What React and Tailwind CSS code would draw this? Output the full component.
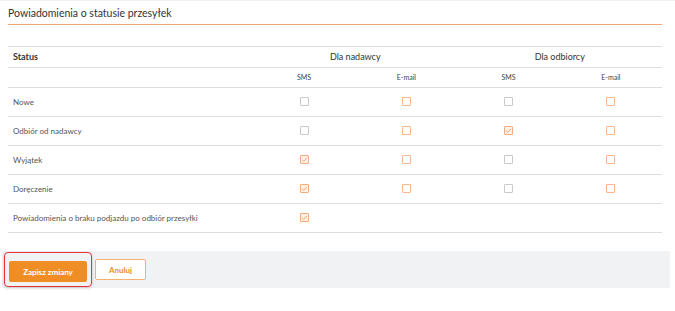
import React from 'react';

const rows = [
  { label: 'Nowe', cells: ['off', 'o', 'off', 'o'] },
  { label: 'Odbiór od nadawcy', cells: ['off', 'o', 'on', 'o'] },
  { label: 'Wyjątek', cells: ['on', 'o', 'off', 'o'] },
  { label: 'Doręczenie', cells: ['on', 'o', 'off', 'o'] },
  { label: 'Powiadomienia o braku podjazdu po odbiór przesyłki', cells: ['on', null, null, null] },
];

const Box = ({ kind }) => {
  if (!kind) return null;
  if (kind === 'on') {
    return (
      <span className="flex mx-auto w-[9px] h-[9px] items-center justify-center border border-[#f5ad7f] bg-[#fdf1e8] rounded-[1px]">
        <svg width="7" height="7" viewBox="0 0 7 7">
          <path d="M1 3.8 L2.8 5.3 L6 1.8" fill="none" stroke="#f0a070" strokeWidth="0.9" />
        </svg>
      </span>
    );
  }
  const color = kind === 'o' ? 'border-[#f7b68c]' : 'border-[#c6c9ce]';
  return <span className={`block mx-auto w-[9px] h-[9px] border ${color} bg-white rounded-[1px]`} />;
};

export default function App() {
  return (
    <div className="w-[675px] h-[311px] bg-white border-t border-[#f0f0f0]" style={{ fontFamily: 'Lato, "Open Sans", sans-serif' }}>
      <div className="ml-2 w-[654px]">
        <div className="pt-[6px] pb-[4px] text-[10.5px] leading-[13px] text-[#333] border-b border-[#f0a67a]">
          Powiadomienia o statusie przesyłek
        </div>
        <table className="mt-[21px] w-full border-collapse table-fixed">
          <colgroup>
            <col className="w-[245px]" />
            <col />
            <col />
            <col />
            <col />
          </colgroup>
          <thead>
            <tr className="border-t border-b border-[#dedede] h-[21px]">
              <th className="text-left pl-[5px] text-[9px] font-bold text-[#333]">Status</th>
              <th colSpan={2} className="text-center text-[9px] font-normal text-[#333]">Dla nadawcy</th>
              <th colSpan={2} className="text-center text-[9px] font-normal text-[#333]">Dla odbiorcy</th>
            </tr>
            <tr className="border-b border-[#dedede] h-[20px]">
              <th />
              <th className="text-center text-[7px] font-normal text-[#444]">SMS</th>
              <th className="text-center text-[7px] font-normal text-[#444]">E-mail</th>
              <th className="text-center text-[7px] font-normal text-[#444]">SMS</th>
              <th className="text-center text-[7px] font-normal text-[#444]">E-mail</th>
            </tr>
          </thead>
          <tbody>
            {rows.map((r) => (
              <tr key={r.label} className="border-b border-[#dedede] h-[29px]">
                <td className="pl-[5px] text-[8px] text-[#555]">{r.label}</td>
                {r.cells.map((c, i) => (
                  <td key={i} className="align-middle pb-[2px]">
                    <Box kind={c} />
                  </td>
                ))}
              </tr>
            ))}
          </tbody>
        </table>
      </div>
      <div className="mt-[18px] ml-[2px] w-[668px] h-[37px] bg-[#f1f2f3] flex items-center">
        <div className="ml-[2px] p-[4px] border-[1.5px] border-[#e8303a] rounded-[4px] shadow-[0_1px_3px_rgba(0,0,0,0.2)]">
          <button className="w-[78px] h-[21px] bg-[#ee8e24] rounded-[2px] text-white text-[8px] font-bold">
            Zapisz zmiany
          </button>
        </div>
        <button className="ml-[3px] w-[51px] h-[21px] bg-white border border-[#f3b070] rounded-[2px] text-[#ee8e24] text-[8px] font-bold">
          Anuluj
        </button>
      </div>
    </div>
  );
}
